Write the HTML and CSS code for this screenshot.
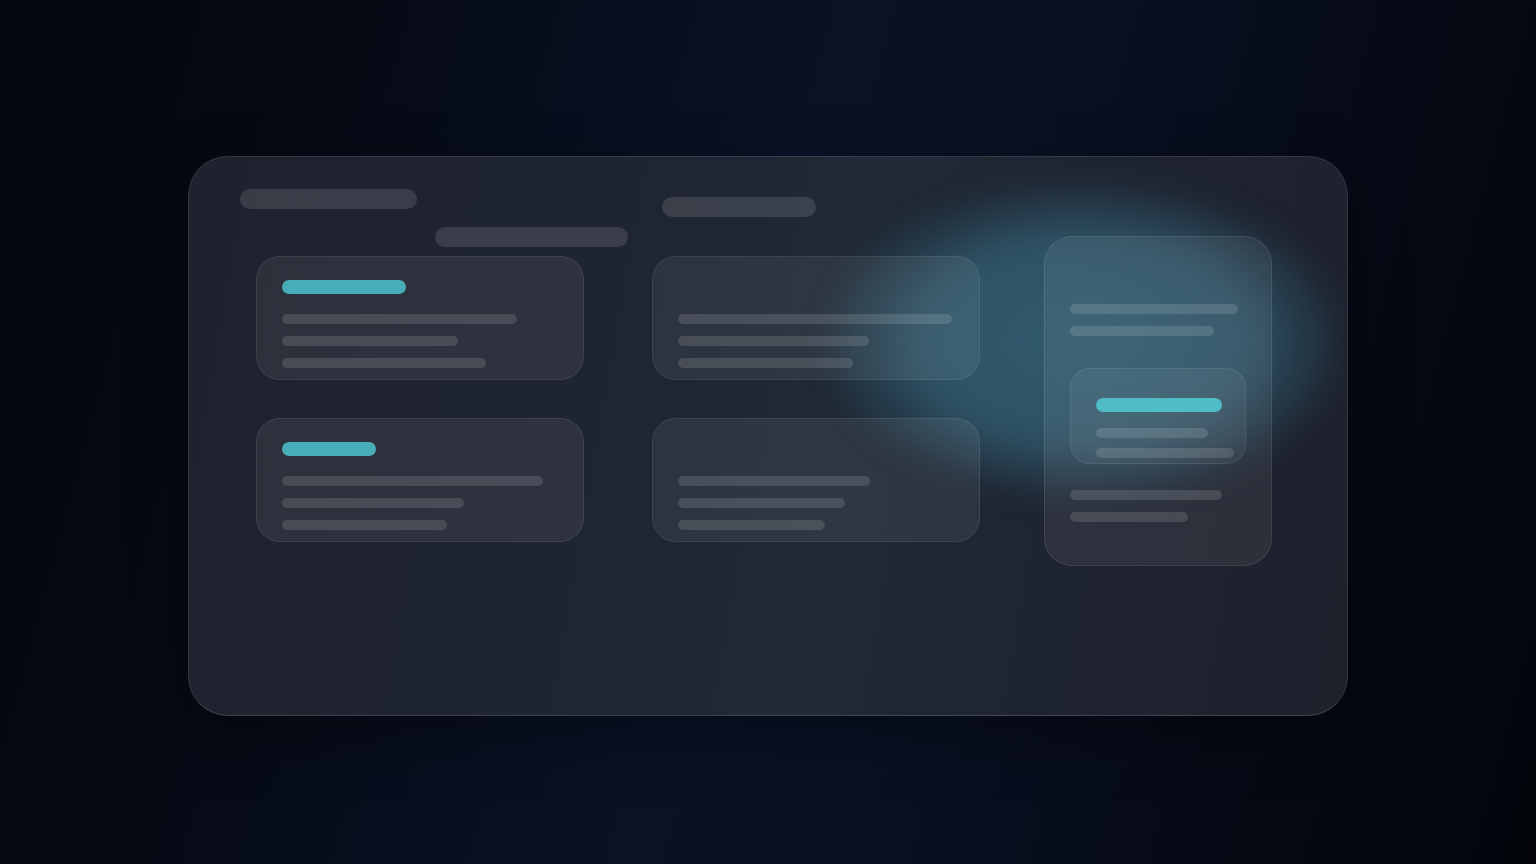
FILE: index.html
```html
<!DOCTYPE html>
<html lang="en">
<head>
<meta charset="utf-8">
<title>Skeleton dashboard</title>
<link rel="stylesheet" href="styles.css">
</head>
<body>
<div class="stage">
  <div class="panel">
    <div class="glow"></div>
    <div class="main">
      <div class="header">
        <span class="hbar hbar-1"></span>
        <span class="hbar hbar-2"></span>
        <span class="hbar hbar-3"></span>
      </div>
      <div class="grid">
        <div class="card">
          <span class="accent" style="width:124px"></span>
          <div class="lines">
            <span class="line" style="width:235px"></span>
            <span class="line" style="width:176px"></span>
            <span class="line" style="width:204px"></span>
          </div>
        </div>
        <div class="card">
          <span class="accent accent-empty"></span>
          <div class="lines">
            <span class="line" style="width:274px"></span>
            <span class="line" style="width:191px"></span>
            <span class="line" style="width:175px"></span>
          </div>
        </div>
        <div class="card">
          <span class="accent" style="width:94px"></span>
          <div class="lines">
            <span class="line" style="width:261px"></span>
            <span class="line" style="width:182px"></span>
            <span class="line" style="width:165px"></span>
          </div>
        </div>
        <div class="card">
          <span class="accent accent-empty"></span>
          <div class="lines">
            <span class="line" style="width:192px"></span>
            <span class="line" style="width:167px"></span>
            <span class="line" style="width:147px"></span>
          </div>
        </div>
      </div>
    </div>
    <div class="side">
      <div class="tall">
        <div class="lines">
          <span class="line" style="width:168px"></span>
          <span class="line" style="width:144px"></span>
        </div>
        <div class="inner">
          <span class="accent accent-bright" style="width:126px"></span>
          <div class="lines lines-tight">
            <span class="line" style="width:112px"></span>
            <span class="line" style="width:138px"></span>
          </div>
        </div>
        <div class="lines">
          <span class="line" style="width:152px"></span>
          <span class="line" style="width:118px"></span>
        </div>
      </div>
    </div>
  </div>
</div>
</body>
</html>
```

FILE: styles.css
```css
* { box-sizing: border-box; }

html, body {
  margin: 0;
  padding: 0;
  width: 1536px;
  height: 864px;
  overflow: hidden;
  font-family: "Inter", "Liberation Sans", sans-serif;
}

body {
  background:
    linear-gradient(105deg, #03060c 0%, #060b17 25%, #0a1226 48%, #0a1124 60%, #060a16 80%, #03050b 100%);
}

.stage {
  height: 864px;
  display: flex;
  justify-content: center;
  padding-top: 156px;
}

.panel {
  position: relative;
  width: 1160px;
  height: 560px;
  border-radius: 40px;
  border: 1px solid rgba(255, 255, 255, 0.09);
  border-bottom-color: rgba(255, 255, 255, 0.14);
  background:
    linear-gradient(100deg, #1e222e 0%, #1f2532 40%, #202a36 55%, #1f2431 75%, #1d212c 100%);
  display: flex;
  align-items: flex-start;
  padding: 32px 0 0 51px;
  overflow: hidden;
  box-shadow: 0 20px 60px rgba(0, 0, 0, 0.35);
}

.glow {
  position: absolute;
  left: 636px;
  top: 26px;
  width: 520px;
  height: 316px;
  border-radius: 50%;
  background: radial-gradient(ellipse at 50% 50%, rgba(60, 122, 144, 0.64) 0%, rgba(58, 118, 140, 0.56) 45%, rgba(52, 104, 126, 0.22) 64%, transparent 74%);
  filter: blur(14px);
  pointer-events: none;
}

.main {
  position: relative;
  width: 740px;
}

.header {
  display: flex;
  align-items: flex-start;
  height: 58px;
}

.hbar {
  display: block;
  height: 20px;
  border-radius: 10px;
  background: rgba(255, 255, 255, 0.12);
}

.hbar-1 { width: 177px; }
.hbar-2 { width: 193px; margin-left: 18px; margin-top: 38px; }
.hbar-3 { width: 154px; margin-left: 34px; margin-top: 8px; }

.grid {
  margin-top: 9px;
  padding-left: 16px;
  display: grid;
  grid-template-columns: 328px 328px;
  column-gap: 68px;
  row-gap: 38px;
}

.card {
  height: 124px;
  border-radius: 24px;
  border: 1px solid rgba(255, 255, 255, 0.08);
  background: rgba(255, 255, 255, 0.065);
  padding: 23px 25px 0;
}

.accent {
  display: block;
  height: 14px;
  border-radius: 7px;
  background: #47adb8;
}

.accent-empty { background: transparent; }

.accent-bright { background: #4fbcc6; }

.lines {
  display: flex;
  flex-direction: column;
  gap: 12px;
  margin-top: 20px;
}

.line {
  display: block;
  height: 10px;
  border-radius: 5px;
  background: rgba(255, 255, 255, 0.13);
}

.side {
  position: relative;
  margin-left: 64px;
  margin-top: 47px;
}

.tall {
  width: 228px;
  height: 330px;
  border-radius: 28px;
  border: 1px solid rgba(255, 255, 255, 0.09);
  background: rgba(255, 255, 255, 0.065);
  padding: 67px 25px 0;
}

.tall > .lines { margin-top: 0; }

.inner {
  width: 176px;
  height: 96px;
  margin: 32px 0 26px;
  border-radius: 20px;
  border: 1px solid rgba(255, 255, 255, 0.08);
  background: rgba(255, 255, 255, 0.05);
  padding: 29px 25px 0;
}

.lines-tight {
  margin-top: 16px;
  gap: 10px;
}
```
